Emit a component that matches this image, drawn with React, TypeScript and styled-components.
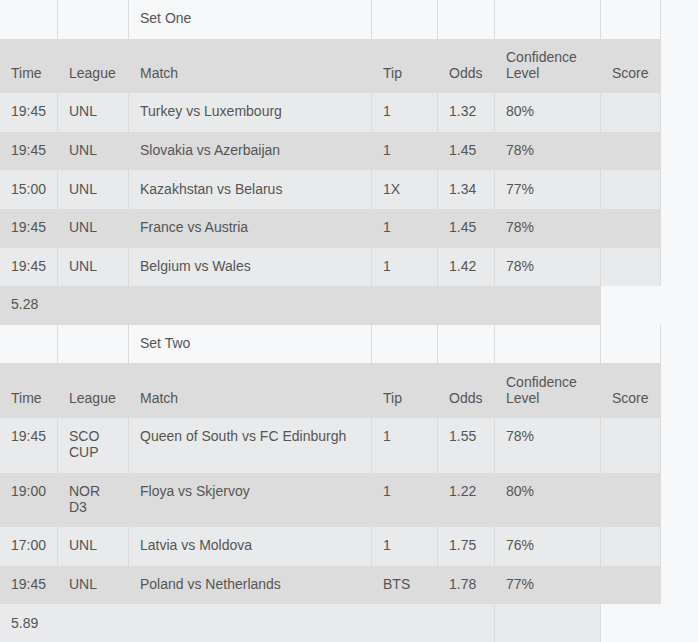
import React from "react";
import styled, { createGlobalStyle, css } from "styled-components";

const GlobalStyle = createGlobalStyle`
  html, body {
    margin: 0;
    padding: 0;
    background: #f7f8fa;
  }
  body {
    font-family: "Liberation Sans", Arial, sans-serif;
    font-size: 14px;
    color: #555;
  }
`;

type Tone = "set" | "head" | "light" | "dark";

const toneBg: Record<Tone, string> = {
  set: "#f7f8fa",
  head: "#dcdcdc",
  light: "#e9eaeb",
  dark: "#dcdcdc",
};

const Table = styled.table`
  width: 661px;
  table-layout: fixed;
  border-collapse: separate;
  border-spacing: 0;
  font-size: 14px;
  color: #555;
`;

const Row = styled.tr<{ $tone: Tone }>`
  & > td,
  & > th {
    background: ${(p) => toneBg[p.$tone]};
  }
  ${(p) =>
    p.$tone === "head" &&
    css`
      & > th {
        vertical-align: bottom;
      }
    `}
`;

const Cell = styled.td<{ $noBorder?: boolean }>`
  box-sizing: border-box;
  padding: 10.3px 11px 12.3px;
  line-height: 16px;
  text-align: left;
  vertical-align: top;
  font-weight: normal;
  border-right: 1px solid ${(p) => (p.$noBorder ? "transparent" : "#dcdcdc")};
  white-space: normal;
`;

const HeadCell = styled(Cell).attrs({ as: "th" })``;

const widths = [58, 71, 243, 66, 57, 106, 60];

type Match = {
  time: string;
  league: string;
  match: string;
  tip: string;
  odds: string;
  conf: string;
};

type SetData = {
  title: string;
  total: string;
  matches: Match[];
  totalTone: Tone;
};

const sets: SetData[] = [
  {
    title: "Set One",
    total: "5.28",
    totalTone: "dark",
    matches: [
      { time: "19:45", league: "UNL", match: "Turkey vs Luxembourg", tip: "1", odds: "1.32", conf: "80%" },
      { time: "19:45", league: "UNL", match: "Slovakia vs Azerbaijan", tip: "1", odds: "1.45", conf: "78%" },
      { time: "15:00", league: "UNL", match: "Kazakhstan vs Belarus", tip: "1X", odds: "1.34", conf: "77%" },
      { time: "19:45", league: "UNL", match: "France vs Austria", tip: "1", odds: "1.45", conf: "78%" },
      { time: "19:45", league: "UNL", match: "Belgium vs Wales", tip: "1", odds: "1.42", conf: "78%" },
    ],
  },
  {
    title: "Set Two",
    total: "5.89",
    totalTone: "light",
    matches: [
      { time: "19:45", league: "SCO CUP", match: "Queen of South vs FC Edinburgh", tip: "1", odds: "1.55", conf: "78%" },
      { time: "19:00", league: "NOR D3", match: "Floya vs Skjervoy", tip: "1", odds: "1.22", conf: "80%" },
      { time: "17:00", league: "UNL", match: "Latvia vs Moldova", tip: "1", odds: "1.75", conf: "76%" },
      { time: "19:45", league: "UNL", match: "Poland vs Netherlands", tip: "BTS", odds: "1.78", conf: "77%" },
    ],
  },
];

const LeagueText = styled.span`
  display: inline-block;
  max-width: 36px;
`;

function SetRows({ data }: { data: SetData }) {
  return (
    <>
      <Row $tone="set">
        <Cell />
        <Cell />
        <Cell>{data.title}</Cell>
        <Cell />
        <Cell />
        <Cell />
        <Cell />
      </Row>
      <Row $tone="head">
        <HeadCell $noBorder>Time</HeadCell>
        <HeadCell $noBorder>League</HeadCell>
        <HeadCell $noBorder>Match</HeadCell>
        <HeadCell $noBorder>Tip</HeadCell>
        <HeadCell $noBorder>Odds</HeadCell>
        <HeadCell $noBorder>Confidence Level</HeadCell>
        <HeadCell $noBorder>Score</HeadCell>
      </Row>
      {data.matches.map((m, i) => (
        <Row key={i} $tone={i % 2 === 0 ? "light" : "dark"}>
          <Cell>{m.time}</Cell>
          <Cell>
            <LeagueText>{m.league}</LeagueText>
          </Cell>
          <Cell>{m.match}</Cell>
          <Cell>{m.tip}</Cell>
          <Cell>{m.odds}</Cell>
          <Cell>{m.conf}</Cell>
          <Cell />
        </Row>
      ))}
      <Row $tone={data.totalTone}>
        <Cell colSpan={5}>{data.total}</Cell>
        <Cell />
      </Row>
    </>
  );
}

export default function App() {
  return (
    <>
      <GlobalStyle />
      <Table>
        <colgroup>
          {widths.map((w, i) => (
            <col key={i} style={{ width: w }} />
          ))}
        </colgroup>
        <tbody>
          {sets.map((s) => (
            <SetRows key={s.title} data={s} />
          ))}
        </tbody>
      </Table>
    </>
  );
}
